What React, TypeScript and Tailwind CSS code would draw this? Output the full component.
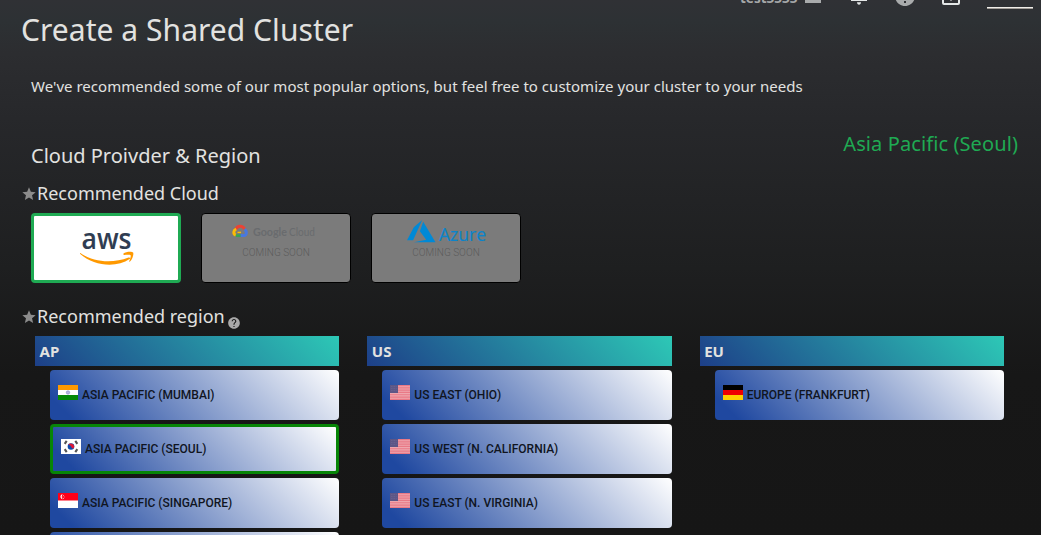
import type { ReactNode } from "react";

const noto = "font-['Noto_Sans',sans-serif]";
const roboto = "font-['Roboto',sans-serif]";

function Star() {
  return (
    <svg viewBox="0 0 24 24" className="mt-px h-4 w-4 shrink-0 fill-[#8c8c8c]">
      <path d="M12 17.27 18.18 21l-1.64-7.03L22 9.24l-7.19-.61L12 2 9.19 8.63 2 9.24l5.46 4.73L5.82 21z" />
    </svg>
  );
}

const helpPath =
  "M12 2C6.48 2 2 6.48 2 12s4.48 10 10 10 10-4.48 10-10S17.52 2 12 2zm1 17h-2v-2h2v2zm2.07-7.75-.9.92C13.45 12.9 13 13.5 13 15h-2v-.5c0-1.1.45-2.1 1.17-2.83l1.24-1.26c.37-.36.59-.86.59-1.41 0-1.1-.9-2-2-2s-2 .9-2 2H8c0-2.21 1.79-4 4-4s4 1.79 4 4c0 .88-.36 1.68-.93 2.25z";

function TopBar() {
  return (
    <header className="flex h-3 items-end overflow-hidden pl-[740px]">
      <span className={`${noto} mb-[3px] h-[22px] w-[57px] whitespace-nowrap text-[13.5px] font-bold leading-[22px] text-[#a5a7a8]`}>
        test3333
      </span>
      <span className="mb-[9px] ml-2 h-4 w-4 shrink-0 bg-[#a9abac]" />
      <svg viewBox="0 0 24 24" className="mb-[7px] ml-[26px] h-6 w-6 shrink-0 fill-[#e4e7e7]">
        <path d="M4 17v3h16v-3l-2-2V9c0-4-2-6-4.500-7h-3C8 3 6 5 6 9v6z" />
        <path d="M10 21.200h4c0 1.500-.9 2.500-2 2.500s-2-1-2-2.500z" />
      </svg>
      <svg viewBox="0 0 24 24" className="mb-[4px] ml-[22px] h-6 w-6 shrink-0 fill-[#a9abac]">
        <path d={helpPath} />
      </svg>
      <svg viewBox="0 0 18 18" className="mb-[7px] ml-[25px] h-[18px] w-[18px] shrink-0 fill-none stroke-[#e4e7e7] stroke-2">
        <rect x="1" y="1" width="16" height="16" rx="1" />
        <path d="M9 5v9" strokeWidth="1" />
      </svg>
      <span className="mb-[3px] ml-[27px] h-[2px] w-[46px] shrink-0 border-t border-[#f0eeea] bg-[#a29d98]" />
    </header>
  );
}

function AwsLogo() {
  return (
    <svg viewBox="0 0 54 36" className="ml-px mt-[15px] h-9 w-[54px]">
      <text x="26.500" y="18" textAnchor="middle" textLength="50" lengthAdjust="spacingAndGlyphs" className="fill-[#303d52] stroke-[#303d52] font-['Open_Sans',sans-serif] text-[28.500px] font-semibold" strokeWidth=".1">
        aws
      </text>
      <path d="M.7 22.200C14 31.500 33 32.500 48.500 26.500c1.300-.5 2.300.6 1.100 1.600C37 37 14 35.500.3 23.100c-.6-.6-.2-1.200.4-.9z" fill="#ff9900" />
      <path d="M43.500 22.600c2-1.800 8.500-2.300 9.600-1 .9 1.300-.6 6.800-3.100 8.900-.5.400-.9.200-.7-.4.700-1.900 1.900-5 1.300-5.800-.7-.9-4.600-.5-6.400-.3-.8.100-1-.9-.7-1.400z" fill="#ff9900" />
    </svg>
  );
}

function GoogleLogo() {
  return (
    <svg viewBox="0 0 84 16" className="mr-[5px] mt-[10px] h-4 w-[84px]">
      <g fill="none" strokeWidth="3">
        <path d="M3.400 5.500C5.500 1.200 10.500 1.200 12.600 5" stroke="#ea4335" />
        <path d="M4.200 5C1.200 6.500 1 9.800 3.800 11.300" stroke="#fbbc05" />
        <path d="M3.800 11.600H9" stroke="#34a853" strokeWidth="2.600" />
        <path d="M5.500 8.400H9" stroke="#fbbc05" strokeWidth="1.400" />
        <path d="M8.600 11.600h3.600c2.800-.6 2.900-4.800.2-6" stroke="#4978df" />
      </g>
      <text x="21" y="12" textLength="34" lengthAdjust="spacingAndGlyphs" className="fill-[#696b6e] font-['Lato',sans-serif] text-[11.500px] font-bold">
        Google
      </text>
      <text x="57" y="12" textLength="26" lengthAdjust="spacingAndGlyphs" className="fill-[#696b6e] font-['Lato',sans-serif] text-[11.500px]">
        Cloud
      </text>
    </svg>
  );
}

function AzureLogo() {
  return (
    <svg viewBox="0 0 80 25" className="ml-[2px] mt-[5px] h-[25px] w-20">
      <path d="M15.200 1 6.800 8.300 0 21.200h6.100zM16.200 2.700 12.900 12.200l6.300 8.500-12.300 2.600h21.600z" fill="#0089d6" />
      <text x="32" y="21.500" textLength="47" lengthAdjust="spacingAndGlyphs" className="fill-[#0c84ca] stroke-[#0c84ca] font-['Open_Sans',sans-serif] text-[19px]" strokeWidth=".2">
        Azure
      </text>
    </svg>
  );
}

function ComingSoon({ children }: { children: ReactNode }) {
  return (
    <button className="flex h-[70px] w-[150px] flex-col items-center rounded-[4px] border border-black bg-[#7b7b7b]">
      {children}
    </button>
  );
}

function Flag({ country }: { country: string }) {
  return (
    <svg viewBox="0 0 20 15" className="h-[15px] w-5 shrink-0">
      {country === "in" && (
        <>
          <path d="M0 0h20v15H0z" fill="#fff" />
          <path d="M0 0h20v5H0z" fill="#ff9900" />
          <path d="M0 10h20v5H0z" fill="#078a07" />
          <circle cx="10" cy="7.500" r="1.700" fill="#b9b9e0" stroke="#8585c8" strokeWidth=".6" />
        </>
      )}
      {country === "kr" && (
        <>
          <path d="M0 0h20v15H0z" fill="#fff" />
          <circle cx="10" cy="7.500" r="3.300" fill="#0b49ab" />
          <path d="M7.200 5.800a3.300 3.300 0 0 1 5.700 3.200C12 10 10.800 9.400 10 7.600 9.200 6 7.800 5.500 7.200 5.800z" fill="#df1735" />
          <path d="m3.700 4.800 2-3M14.300 1.800l2 3M3.700 10.200l2 3M14.300 13.200l2-3" stroke="#555" strokeWidth="2.100" />
        </>
      )}
      {country === "sg" && (
        <>
          <path d="M0 0h20v15H0z" fill="#fff" />
          <path d="M0 0h20v7.500H0z" fill="#ff0019" />
          <path d="M4.700 1.300c-3 .4-3 4.400 0 5-1.300-1.300-1.300-3.700 0-5z" fill="#fff" />
          <path d="M5 2.600h1M4.500 4h.7M6.200 4h.7M5 5.500h1" stroke="#ffb8bd" strokeWidth=".8" />
        </>
      )}
      {country === "us" && (
        <>
          <path d="M0 0h20v15H0z" fill="#e97986" />
          <path d="M0 1.700h20M0 4h20M0 6.300h20M0 8.600h20M0 10.900h20M0 13.200h20" stroke="#eea7ae" strokeWidth="1.100" />
          <path d="M0 0h8v8H0z" fill="#5d5686" />
          <path d="M1 1.500h6M1 3.500h6M1 5.500h6" stroke="#716b98" strokeWidth=".6" strokeDasharray=".8 .8" />
        </>
      )}
      {country === "de" && (
        <>
          <path d="M0 0h20v5H0z" fill="#000" />
          <path d="M0 5h20v5H0z" fill="#f00000" />
          <path d="M0 10h20v5H0z" fill="#ffd000" />
        </>
      )}
    </svg>
  );
}

type Region = { name: string; country: string; selected?: boolean };

const groups: { title: string; regions: Region[] }[] = [
  {
    title: "AP",
    regions: [
      { name: "ASIA PACIFIC (MUMBAI)", country: "in" },
      { name: "ASIA PACIFIC (SEOUL)", country: "kr", selected: true },
      { name: "ASIA PACIFIC (SINGAPORE)", country: "sg" },
      { name: "", country: "" },
    ],
  },
  {
    title: "US",
    regions: [
      { name: "US EAST (OHIO)", country: "us" },
      { name: "US WEST (N. CALIFORNIA)", country: "us" },
      { name: "US EAST (N. VIRGINIA)", country: "us" },
    ],
  },
  { title: "EU", regions: [{ name: "EUROPE (FRANKFURT)", country: "de" }] },
];

function RegionButton({ region }: { region: Region }) {
  return (
    <button
      className={`${roboto} ml-[15px] flex h-[50px] shrink-0 items-center rounded-[4px] bg-[linear-gradient(45deg,#1f48a0_7%,#ffffff_100%)] px-2 text-[12px] font-medium text-[#10151f] ${
        region.selected ? "border-[3px] border-[#078507]" : ""
      }`}
    >
      <span className="mb-[5px] flex">{region.country && <Flag country={region.country} />}</span>
      <span className="ml-1 whitespace-nowrap">{region.name}</span>
    </button>
  );
}

export default function App() {
  return (
    <main className={`${noto} flex h-[535px] w-[1041px] flex-col overflow-hidden bg-[linear-gradient(180deg,#303135_0%,#2d3134_4%,#2c2d30_10%,#27282b_22%,#1e1f20_50%,#171717_70%,#161616_100%)] text-[#e2e2e0] *:shrink-0`}>
      <TopBar />
      <h1 className="ml-[21px] h-9 whitespace-nowrap text-[30px] leading-9 tracking-[0.04px]">Create a Shared Cluster</h1>
      <p className="ml-[31px] mt-[26px] h-6 whitespace-nowrap text-[15px] leading-6 tracking-[0.02px]">
        We've recommended some of our most popular options, but feel free to customize your cluster to your needs
      </p>
      <div className="ml-[31px] mr-[23px] mt-8 flex h-10 justify-between text-[20px] leading-7">
        <h2 className="self-end">Cloud Proivder &amp; Region</h2>
        <span className="tracking-[0.1px] text-[#1faa53]">Asia Pacific (Seoul)</span>
      </div>
      <div className="ml-[21px] mt-[9px] flex h-7 items-center text-[18px] leading-7">
        <Star />
        <h3>Recommended Cloud</h3>
      </div>
      <div className="ml-[31px] mt-[6px] flex gap-5">
        <button className="flex h-[70px] w-[150px] justify-center rounded-[4px] border-[3px] border-[#1faa53] bg-white">
          <AwsLogo />
        </button>
        <ComingSoon>
          <GoogleLogo />
          <span className={`${roboto} mt-[7px] text-[10px] font-light leading-3 text-[#5c5c5c]`}>COMING SOON</span>
        </ComingSoon>
        <ComingSoon>
          <AzureLogo />
          <span className={`${roboto} mt-[3px] text-[10px] font-light leading-3 text-[#5c5c5c]`}>COMING SOON</span>
        </ComingSoon>
      </div>
      <div className="ml-[21px] mt-[19px] flex h-7 items-center text-[18px] leading-7">
        <Star />
        <h3>Recommended region</h3>
        <svg viewBox="0 0 24 24" className="ml-[2px] mt-[14px] h-[14px] w-[14px] fill-[#a9a9a9]">
          <path d={helpPath} />
        </svg>
      </div>
      <div className="ml-[35px] mt-[6px] grid w-[969px] grid-cols-3 gap-7">
        {groups.map((g) => (
          <section key={g.title} className="flex flex-col gap-1">
            <h4 className="h-[30px] bg-[linear-gradient(45deg,#1d3f88_0%,#2dc8b6_100%)] pl-[4.5px] text-[15px] font-bold leading-[31px]">
              {g.title}
            </h4>
            {g.regions.map((r) => (
              <RegionButton key={r.name} region={r} />
            ))}
          </section>
        ))}
      </div>
    </main>
  );
}
